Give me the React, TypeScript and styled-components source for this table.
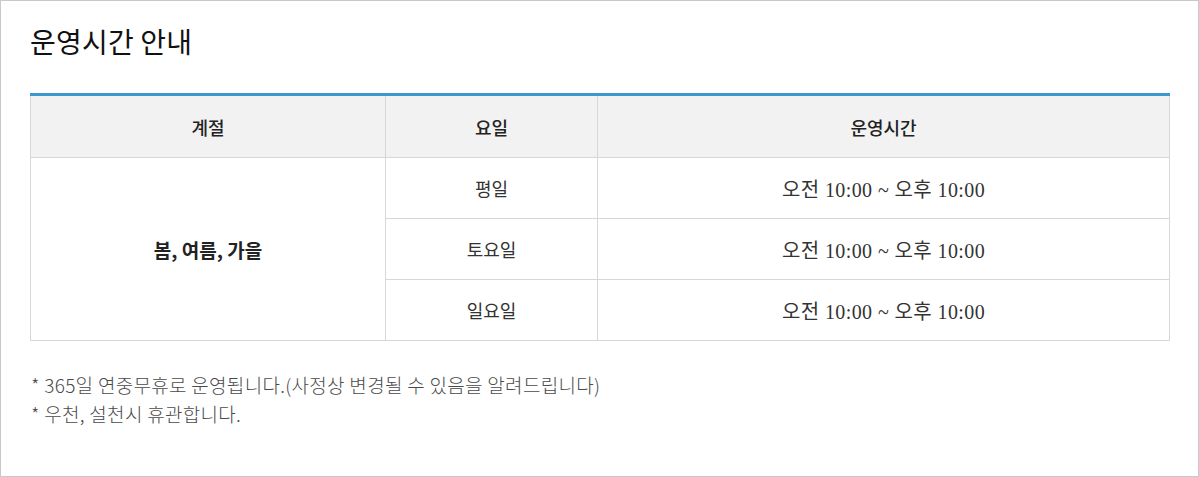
import styled, { createGlobalStyle } from 'styled-components';

const GlobalStyle = createGlobalStyle`
  html, body {
    margin: 0;
    padding: 0;
    background: #fff;
  }
  body {
    font-family: "Noto Sans CJK KR", "Noto Sans", sans-serif;
  }
`;

const schedule = [
  { day: '평일', hours: '오전 10:00 ~ 오후 10:00' },
  { day: '토요일', hours: '오전 10:00 ~ 오후 10:00' },
  { day: '일요일', hours: '오전 10:00 ~ 오후 10:00' },
];

const notes = [
  '* 365일 연중무휴로 운영됩니다.(사정상 변경될 수 있음을 알려드립니다)',
  '* 우천, 설천시 휴관합니다.',
];

const Frame = styled.section`
  box-sizing: border-box;
  width: 1199px;
  height: 477px;
  border: 1px solid #c9c9c9;
  padding: 22px 28px 0 29px;
`;

const Title = styled.h2`
  margin: 0 0 33px;
  font-size: 28px;
  line-height: 37px;
  font-weight: 400;
  color: #111;
  letter-spacing: 0.2px;
`;

const Table = styled.table`
  width: 100%;
  border-collapse: collapse;
  border-top: 3px solid #3b99cf;
  table-layout: fixed;
`;

const HeadCell = styled.th`
  height: 61px;
  padding: 0;
  background: #f2f2f2;
  border: 1px solid #d7d7d7;
  border-top: none;
  font-size: 18px;
  font-weight: 500;
  color: #222;
  text-align: center;
  vertical-align: middle;
`;

const Cell = styled.td<{ $strong?: boolean; $serif?: boolean }>`
  height: 60px;
  padding: 0;
  border: 1px solid #d7d7d7;
  text-align: center;
  vertical-align: middle;
  font-size: ${(p) => (p.$serif ? '20px' : p.$strong ? '19px' : '18px')};
  letter-spacing: ${(p) => (p.$serif ? '0.4px' : '0')};
  font-weight: ${(p) => (p.$strong ? 700 : 400)};
  font-family: ${(p) =>
    p.$serif
      ? '"Liberation Serif", "Noto Sans CJK KR", serif'
      : '"Noto Sans CJK KR", "Noto Sans", sans-serif'};
  color: ${(p) => (p.$strong ? '#222' : '#333')};
`;

const NoteList = styled.ul`
  list-style: none;
  margin: 29px 0 0;
  padding: 0 0 0 1px;
`;

const Note = styled.li`
  font-size: 19px;
  line-height: 29px;
  font-weight: 300;
  color: #4a4a4a;
  letter-spacing: 0.3px;
`;

export default function App() {
  return (
    <>
      <GlobalStyle />
      <Frame>
        <Title>운영시간 안내</Title>
        <Table>
          <colgroup>
            <col style={{ width: 355 }} />
            <col style={{ width: 212 }} />
            <col />
          </colgroup>
          <thead>
            <tr>
              <HeadCell>계절</HeadCell>
              <HeadCell>요일</HeadCell>
              <HeadCell>운영시간</HeadCell>
            </tr>
          </thead>
          <tbody>
            {schedule.map((row, i) => (
              <tr key={row.day}>
                {i === 0 && (
                  <Cell $strong rowSpan={schedule.length}>
                    봄, 여름, 가을
                  </Cell>
                )}
                <Cell>{row.day}</Cell>
                <Cell $serif>{row.hours}</Cell>
              </tr>
            ))}
          </tbody>
        </Table>
        <NoteList>
          {notes.map((n) => (
            <Note key={n}>{n}</Note>
          ))}
        </NoteList>
      </Frame>
    </>
  );
}
